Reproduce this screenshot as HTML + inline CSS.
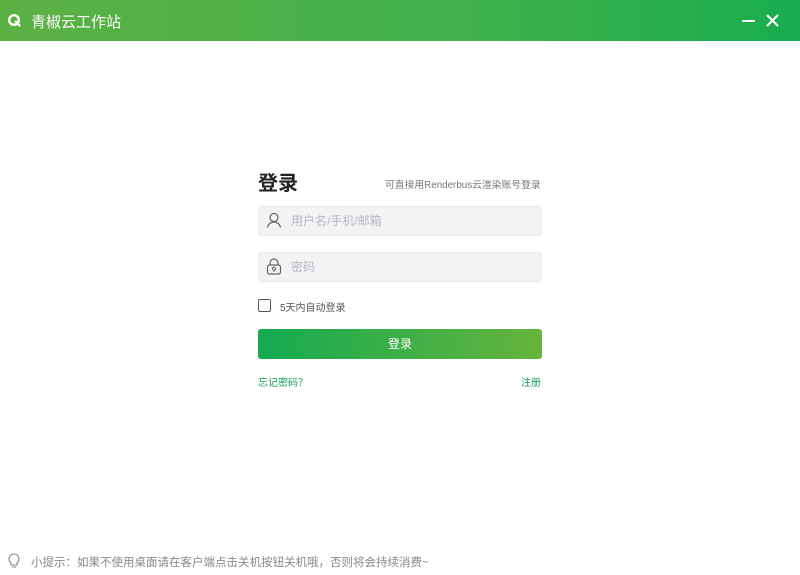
<!DOCTYPE html>
<html><head><meta charset="utf-8"><style>
*{margin:0;padding:0;box-sizing:border-box}
body{width:800px;height:575px;background:#fff;position:relative;overflow:hidden;font-family:"Liberation Sans","Noto Sans CJK SC",sans-serif}
.top{position:absolute;left:0;top:0;width:800px;height:41px;background:linear-gradient(90deg,#5db143,#3fb14c 60%,#17ad4f)}
.title{position:absolute;left:31px;top:11px;color:#fff;font-size:15px}
.a{position:absolute}
.inp{position:absolute;left:258px;width:284px;height:30px;background:#f2f3f5;border:1px solid #e6e8eb;border-radius:3px;font-size:12px;color:#b5b8bd;padding-left:32px;line-height:28px}
</style></head><body>
<div class="top"></div>
<svg class="a" style="left:7px;top:13px" width="15" height="15" viewBox="0 0 15 15"><circle cx="7" cy="7" r="4.8" fill="none" stroke="#fff" stroke-width="2.4"/><path d="M8 8l5 5" stroke="#fff" stroke-width="2.6"/></svg>
<div class="title">青椒云工作站</div>
<div class="a" style="left:742px;top:20px;width:13px;height:2px;background:#fff"></div>
<svg class="a" style="left:766px;top:14px" width="13" height="13"><path d="M1 1l11 11M12 1L1 12" stroke="#fff" stroke-width="2.2"/></svg>
<div class="a" style="left:258px;top:167px;font-size:20px;font-weight:bold;color:#222">登录</div>
<div class="a" style="left:385px;top:177px;font-size:9.8px;color:#777">可直接用Renderbus云渲染账号登录</div>
<div class="inp" style="top:206px">用户名/手机/邮箱</div>
<svg class="a" style="left:266px;top:212px" width="16" height="16"><circle cx="8" cy="5.5" r="4" fill="none" stroke="#666" stroke-width="1.2"/><path d="M1.5 15.5c1-4 3.5-5.5 6.5-5.5s5.5 1.5 6.5 5.5" fill="none" stroke="#666" stroke-width="1.2"/></svg>
<div class="inp" style="top:252px">密码</div>
<svg class="a" style="left:266px;top:258px" width="16" height="17"><path d="M4 7V5a4 4 0 0 1 8 0v2" fill="none" stroke="#666" stroke-width="1.2"/><rect x="1.5" y="7" width="13" height="9" rx="2" fill="none" stroke="#666" stroke-width="1.2"/><circle cx="8" cy="10.5" r="1.5" fill="none" stroke="#666"/><path d="M8 12v2" stroke="#666"/></svg>
<div class="a" style="left:258px;top:299px;width:13px;height:13px;border:1px solid #555;border-radius:2px"></div>
<div class="a" style="left:280px;top:299px;font-size:10px;color:#555">5天内自动登录</div>
<div class="a" style="left:258px;top:329px;width:284px;height:30px;border-radius:3px;background:linear-gradient(90deg,#14aa52,#66b43c);color:#fff;font-size:12px;text-align:center;line-height:30px">登录</div>
<div class="a" style="left:258px;top:374px;font-size:10px;color:#1aa05a">忘记密码？</div>
<div class="a" style="left:521px;top:374px;font-size:10px;color:#1aa05a">注册</div>
<svg class="a" style="left:8px;top:553px" width="12" height="16"><path d="M3 10a5 5 0 1 1 6 0v2H3z" fill="none" stroke="#888" stroke-width="1.1"/><path d="M4 14h4" stroke="#888"/></svg>
<div class="a" style="left:31px;top:554px;font-size:11.5px;color:#888">小提示：如果不使用桌面请在客户端点击关机按钮关机哦，否则将会持续消费~</div>
</body></html>
